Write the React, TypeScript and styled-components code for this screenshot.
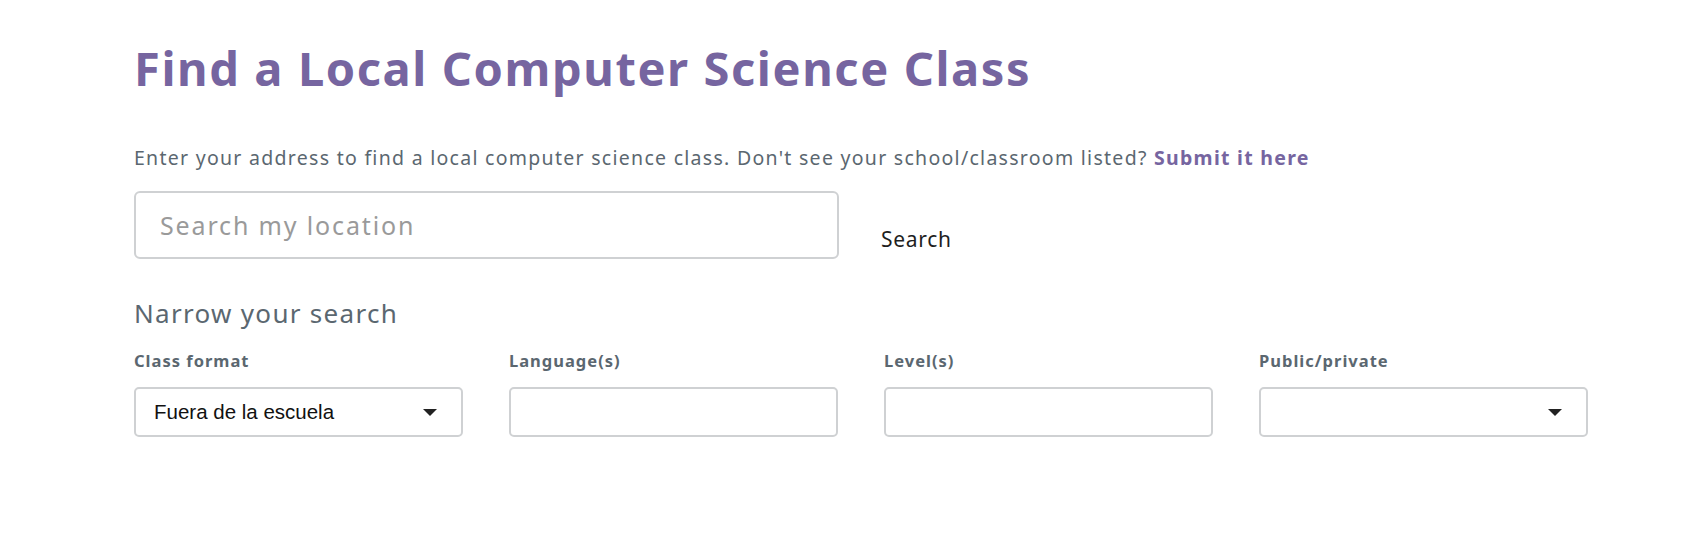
import React from "react";
import styled, { createGlobalStyle } from "styled-components";

const Global = createGlobalStyle`
  html, body { margin: 0; padding: 0; background: #ffffff; }
  body { font-family: "Noto Sans", "Open Sans", sans-serif; }
  * { box-sizing: border-box; }
`;

const Page = styled.div`
  width: 1690px;
  padding: 38px 0 0 134px;
`;

const Title = styled.h1`
  margin: 0;
  font-family: "Noto Sans", sans-serif;
  font-weight: 700;
  font-size: 47px;
  line-height: 60px;
  color: #7665a0;
  letter-spacing: 1.6px;
`;

const Intro = styled.p`
  margin: 48px 0 0 0;
  font-size: 19.5px;
  line-height: 24px;
  letter-spacing: 1.28px;
  color: #5b6770;
`;

const Strong = styled.a`
  color: #7665a0;
  font-weight: 700;
  text-decoration: none;
`;

const SearchRow = styled.div`
  display: flex;
  align-items: flex-end;
  gap: 42px;
  margin-top: 21px;
`;

const SearchInput = styled.input`
  width: 705px;
  height: 68px;
  border: 2px solid #cfd1d3;
  border-radius: 6px;
  padding: 0 24px;
  font-family: "Noto Sans", sans-serif;
  font-size: 25px;
  letter-spacing: 1.85px;
  color: #333;
  outline: none;
  &::placeholder { color: #9a9a9a; }
`;

const SearchButton = styled.button`
  background: none;
  border: none;
  padding: 0 0 6px 0;
  font-family: "Noto Sans", sans-serif;
  font-size: 21px;
  letter-spacing: 0.7px;
  color: #1e1e1e;
  cursor: pointer;
`;

const Subhead = styled.h2`
  margin: 38px 0 0 0;
  font-weight: 400;
  font-size: 26px;
  line-height: 32px;
  letter-spacing: 1.3px;
  color: #5b6770;
`;

const Filters = styled.div`
  display: grid;
  grid-template-columns: repeat(4, 329px);
  column-gap: 46px;
  margin-top: 22px;
`;

const Field = styled.div`
  display: flex;
  flex-direction: column;
`;

const Label = styled.label`
  font-size: 16.5px;
  font-weight: 700;
  line-height: 20px;
  letter-spacing: 1px;
  color: #5b6770;
  margin-bottom: 16px;
`;

const Box = styled.div`
  position: relative;
  height: 50px;
  border: 2px solid #cfd1d3;
  border-radius: 5px;
  display: flex;
  align-items: center;
  padding: 0 18px;
  font-family: "Liberation Sans", Arial, sans-serif;
  font-size: 20.5px;
  color: #111;
  background: #fff;
`;

const Caret = styled.span`
  position: absolute;
  right: 24px;
  top: 50%;
  margin-top: -3px;
  width: 0;
  height: 0;
  border-left: 7px solid transparent;
  border-right: 7px solid transparent;
  border-top: 7px solid #222;
`;

type FilterProps = { label: string; value?: string; select?: boolean };

const Filter: React.FC<FilterProps> = ({ label, value, select }) => (
  <Field>
    <Label>{label}</Label>
    <Box>
      {value}
      {select && <Caret />}
    </Box>
  </Field>
);

export default function App() {
  return (
    <>
      <Global />
      <Page>
        <Title>Find a Local Computer Science Class</Title>
        <Intro>
          Enter your address to find a local computer science class. Don't see your school/classroom listed?{" "}
          <Strong href="#">Submit it here</Strong>
        </Intro>
        <SearchRow>
          <SearchInput placeholder="Search my location" />
          <SearchButton>Search</SearchButton>
        </SearchRow>
        <Subhead>Narrow your search</Subhead>
        <Filters>
          <Filter label="Class format" value="Fuera de la escuela" select />
          <Filter label="Language(s)" />
          <Filter label="Level(s)" />
          <Filter label="Public/private" select />
        </Filters>
      </Page>
    </>
  );
}
